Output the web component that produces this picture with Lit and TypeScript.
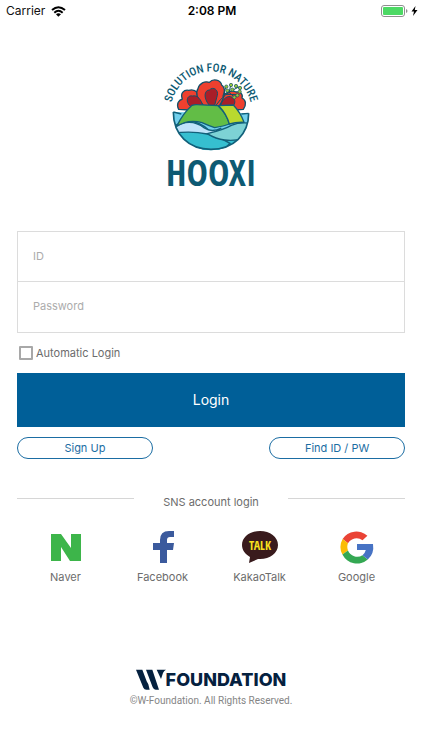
import { LitElement, html, css, svg } from "lit";
import { customElement, property } from "lit/decorators.js";

@customElement("status-bar")
export class StatusBar extends LitElement {
  static styles = css`
    :host {
      display: grid;
      grid-template-columns: 1fr auto 1fr;
      align-items: center;
      height: 22px;
      padding: 0 4px 0 6px;
      font-size: 12px;
      line-height: 16px;
      color: #111;
    }
    .carrier,
    .power {
      display: flex;
      align-items: center;
      gap: 6px;
    }
    .power {
      justify-content: flex-end;
      gap: 3px;
    }
    .time {
      font-weight: 600;
      color: #000;
    }
    svg {
      display: block;
    }
  `;

  render() {
    return html`
      <div class="carrier">
        <span>Carrier</span>
        <svg width="15" height="11" viewBox="0 0 45 33" aria-label="Wi-Fi">
          <g fill="none" stroke="#000" stroke-width="6">
            <path d="M3 12Q22 -5 42 12" />
            <path d="M10 20Q22 9 35 20" />
          </g>
          <path d="M15 25Q22 19 30 25L22 32Z" />
        </svg>
      </div>
      <span class="time">2:08 PM</span>
      <div class="power">
        <svg width="27" height="12" viewBox="0 0 27 12" aria-label="Battery">
          <rect x="0.5" y="0.5" width="23" height="11" rx="2.5" fill="#fff" stroke="#8f8f8f" />
          <rect x="2" y="2" width="20" height="8" rx="1" fill="#4cd964" />
          <path d="M25 4Q26.500 4.500 26.500 6T25 8Z" fill="#8f8f8f" />
        </svg>
        <svg width="7" height="10" viewBox="0 0 7 10" aria-label="Charging">
          <path d="M4.500 0L0.500 5.600H3L2 10L6.500 4H3.800Z" />
        </svg>
      </div>
    `;
  }
}

@customElement("hooxi-logo")
export class HooxiLogo extends LitElement {
  static styles = css`
    :host {
      display: block;
    }
    svg {
      display: block;
      overflow: visible;
    }
    .motto {
      font: 500 34px "Roboto Condensed", Roboto, sans-serif;
      fill: #0d5a73;
    }
    .name {
      font: 700 108px "Open Sans Condensed", "Roboto Condensed", sans-serif;
      fill: #0d5a73;
    }
  `;

  render() {
    return html`
      <svg width="110" height="140" viewBox="0 0 330 420" role="img" aria-label="Hooxi, Solution for Nature">
        <defs>
          <clipPath id="bowl"><path d="M52 174L278 178A112 112 0 0 1 52 174Z" /></clipPath>
          <path id="arc" d="M44 190A122 122 0 1 1 286 190" />
        </defs>
        <g stroke="#12506a" stroke-width="4" stroke-linejoin="round">
          <g fill="#ee402f">
            <path d="M68 166C60 150 68 138 79 135C72 118 84 106 98 109C108 106 118 109 124 116L152 158L100 168Z" />
            <path d="M262 166C272 152 270 138 258 132C262 120 252 112 240 114C228 108 212 116 204 122L180 158L236 168Z" />
            <path d="M142 154C122 136 118 116 126 104C130 88 146 80 160 85C172 72 194 78 197 93C210 102 208 128 190 156Z" />
          </g>
          <g fill="#a91e28" stroke-width="3">
            <path d="M104 158C86 142 94 122 110 126C124 122 136 138 140 154Z" />
            <path d="M160 154C140 130 146 108 160 108C172 96 188 108 184 124L176 154Z" />
            <path d="M194 154C200 134 216 122 228 130C240 136 238 150 230 158Z" />
          </g>
        </g>
        <g clip-path="url(#bowl)" stroke="#12607a" stroke-width="4">
          <path d="M40 160H290V300H40Z" fill="#72d0ec" />
          <path d="M50 220Q104 180 158 228Q215 252 285 218V300H50Z" fill="#36bfd0" />
          <path d="M50 222Q102 188 145 222Q168 237 196 222L150 254Q104 236 50 236Z" fill="#bfe3fa" />
          <path d="M50 238Q104 230 154 240Q190 249 222 268L180 310H50Z" fill="#36bfd0" />
          <path d="M154 239Q206 226 226 214Q250 204 284 208V250Q240 262 206 258Q180 256 154 239Z" fill="#7dd2d5" />
        </g>
        <g stroke="#12607a" stroke-width="4" stroke-linejoin="round">
          <path d="M62 217Q82 177 108 154Q116 151 124 152L186 155Q214 181 220 210Q204 216 176 221Q158 215 138 206Q98 194 62 217Z" fill="#62bd46" />
          <path d="M188 155L232 153Q254 176 264 205Q240 204 220 210Q212 180 188 155Z" fill="#b9d92f" />
          <path d="M52 174L76 180M278 178L256 180" fill="none" />
          <path d="M52 174C52 242 98 286 165 286C232 286 278 242 278 178" fill="none" stroke-width="5" />
        </g>
        <g fill="none" stroke="#164f65" stroke-width="3">
          <path d="M180 154Q202 120 250 98M200 128L210 98M208 121L250 122M220 112L224 94M218 114L238 132" />
          <g fill="#94c83d" stroke-width="2">
            ${[[211, 98], [225, 93], [240, 96], [252, 102], [251, 113], [244, 124], [235, 130], [214, 110], [229, 107]].map(
              ([x, y]) => svg`<circle cx=${x} cy=${y} r="5" />`,
            )}
          </g>
        </g>
        <text class="motto" text-anchor="middle">
          <textPath href="#arc" startOffset="50%">SOLUTION FOR NATURE</textPath>
        </text>
        <text class="name" x="166" y="397" text-anchor="middle">HOOXI</text>
      </svg>
    `;
  }
}

const icons: Record<string, unknown> = {
  Naver: svg`<path d="M3 5H13L23 19V5H33V32H22L13 18V32H3Z" fill="#3db54a" />`,
  Facebook: svg`<path d="M15 34V21H8V14H15V11Q15 2 24 2H29V8H25Q22 8 22 11V14H29L28 21H22V34Z" fill="#3b5a9d" />`,
  KakaoTalk: svg`
    <path d="M18 2C8 2 0 8 0 16C0 21 3 25 8 28L7 34L16 30H18C28 30 36 24 36 16S28 2 18 2Z" fill="#391b1d" />
    <text class="talk" x="18" y="21" text-anchor="middle">TALK</text>`,
  Google: svg`
    <path d="M28.400 6.700A16.500 16.500 0 0 0 3.600 10L9 14.200A10 10 0 0 1 23.500 11.200Z" fill="#ea4335" />
    <path d="M3.600 10A16.500 16.500 0 0 0 3.400 25.600L9 21.500A10 10 0 0 1 9 14.200Z" fill="#fbbc05" />
    <path d="M3.400 25.600A16.500 16.500 0 0 0 28.800 30.600L23.500 26.200A10 10 0 0 1 9 21.500Z" fill="#34a853" />
    <path d="M18 15H34Q35.500 24.500 28.800 30.600L23.500 26.200Q26 24.400 26.800 21H18Z" fill="#4773c4" />`,
};

@customElement("sns-link")
export class SnsLink extends LitElement {
  @property() name = "";

  static styles = css`
    :host {
      display: block;
    }
    a {
      display: flex;
      flex-direction: column;
      align-items: center;
      gap: 4px;
      font-size: 11px;
      line-height: 16px;
      color: #6c6c6c;
      text-decoration: none;
    }
    .talk {
      font: 700 12px "Open Sans Condensed", "Roboto Condensed", sans-serif;
      fill: #f8e11d;
    }
  `;

  render() {
    return html`<a href="#">
      <svg width="36" height="36" viewBox="0 0 36 36" aria-hidden="true">${icons[this.name]}</svg>
      <span>${this.name}</span>
    </a>`;
  }
}

@customElement("app-root")
export class AppRoot extends LitElement {
  static styles = css`
    :host {
      display: block;
      background: #fff;
      color: #6c6c6c;
      font-family: Inter, "Liberation Sans", sans-serif;
      font-size: 11px;
      line-height: 16px;
    }
    * {
      box-sizing: border-box;
    }
    main {
      padding: 0 17px;
    }
    .brand {
      display: flex;
      justify-content: center;
      padding: 32px 0 37px;
    }
    .fields {
      border: 1px solid #dcdcdc;
    }
    .fields input {
      display: block;
      width: 100%;
      height: 50px;
      padding: 0 15px 2px;
      border: 0;
      border-radius: 0;
      background: none;
      font: inherit;
      color: #333;
      outline: none;
    }
    .fields input:first-child {
      border-bottom: 1px solid #dcdcdc;
    }
    .fields input::placeholder {
      color: #acacac;
      opacity: 1;
    }
    .auto {
      display: flex;
      align-items: center;
      gap: 3px;
      width: max-content;
      margin: 12px 0 12px 2px;
    }
    .auto input {
      appearance: none;
      width: 14px;
      height: 14px;
      margin: 0;
      border: 2px solid #a8a8a8;
      border-radius: 1px;
    }
    .auto input:checked {
      background: #005f98;
    }
    button {
      font: inherit;
      cursor: pointer;
    }
    .login {
      display: block;
      width: 100%;
      height: 54px;
      border: 0;
      background: #005f98;
      color: #fff;
      font-size: 14px;
    }
    .actions {
      display: flex;
      justify-content: space-between;
      margin-top: 10px;
    }
    .pill {
      width: 35%;
      height: 22px;
      padding: 0;
      border: 1px solid #1b6da3;
      border-radius: 11px;
      background: #fff;
      color: #1b6da3;
    }
    .divider {
      display: grid;
      grid-template-columns: 1fr auto 1fr;
      gap: 29px;
      margin: 35px 0 19px;
    }
    .divider::before,
    .divider::after {
      content: "";
      height: 1px;
      margin-top: 4px;
      background: #d6d6d6;
    }
    .sns {
      display: grid;
      grid-template-columns: repeat(4, 1fr);
    }
    footer {
      display: flex;
      flex-direction: column;
      align-items: center;
      gap: 2px;
      padding: 84px 0 40px;
      font-family: Roboto, sans-serif;
      font-size: 10px;
      color: #858585;
    }
    .foundation {
      display: flex;
      align-items: flex-end;
      font: 800 18px/22px Inter, "Liberation Sans", sans-serif;
      color: #05213f;
    }
  `;

  render() {
    return html`
      <status-bar></status-bar>
      <main>
        <div class="brand"><hooxi-logo></hooxi-logo></div>
        <form @submit=${(e: Event) => e.preventDefault()}>
          <div class="fields">
            <input type="text" placeholder="ID" aria-label="ID" autocomplete="username" />
            <input type="password" placeholder="Password" aria-label="Password" autocomplete="current-password" />
          </div>
          <label class="auto"><input type="checkbox" />Automatic Login</label>
          <button class="login" type="submit">Login</button>
          <div class="actions">
            <button class="pill" type="button">Sign Up</button>
            <button class="pill" type="button">Find ID / PW</button>
          </div>
        </form>
        <div class="divider">SNS account login</div>
        <nav class="sns" aria-label="SNS account login">
          ${Object.keys(icons).map((name) => html`<sns-link name=${name}></sns-link>`)}
        </nav>
      </main>
      <footer>
        <div class="foundation">
          <svg width="30" height="22" viewBox="0 0 90 66" role="img" aria-label="W">
            <path d="M0 2H19L32 37L37 46L41 62H31Q25 62 22 56ZM30 2H49L69 62H59Q53 62 50 55ZM62 2H90Q84 4 81 12L75 30Z" fill="#05213f" />
          </svg>
          <span>FOUNDATION</span>
        </div>
        <span>©W-Foundation. All Rights Reserved.</span>
      </footer>
    `;
  }
}
